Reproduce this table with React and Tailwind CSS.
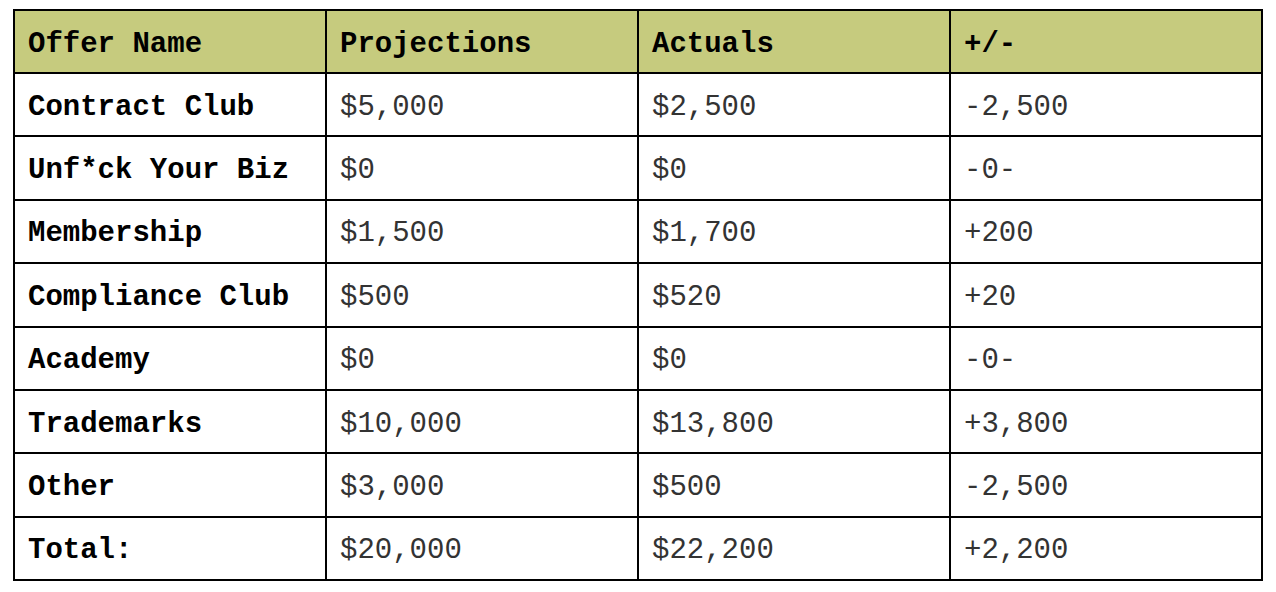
import React from 'react';

const rows = [
    ['Contract Club', '$5,000', '$2,500', '-2,500'],
    ['Unf*ck Your Biz', '$0', '$0', '-0-'],
    ['Membership', '$1,500', '$1,700', '+200'],
    ['Compliance Club', '$500', '$520', '+20'],
    ['Academy', '$0', '$0', '-0-'],
    ['Trademarks', '$10,000', '$13,800', '+3,800'],
    ['Other', '$3,000', '$500', '-2,500'],
    ['Total:', '$20,000', '$22,200', '+2,200'],
];

export default function App() {
    return (
        <div className="w-[1276px] h-[592px] bg-white pt-[9px] pl-[13px] font-['Liberation_Mono','Courier_New',monospace] text-[29px] leading-none text-black">
            <table className="w-[1250px] border-collapse border-2 border-black table-fixed">
                <thead>
                    <tr className="h-[63px] bg-[#c6cb7e]">
                        {['Offer Name', 'Projections', 'Actuals', '+/-'].map((h) => (
                            <th key={h} className="border-2 border-black px-[13px] pt-[5px] text-left font-bold align-middle">
                                {h}
                            </th>
                        ))}
                    </tr>
                </thead>
                <tbody>
                    {rows.map((r) => (
                        <tr key={r[0]} className="h-[63.4px]">
                            <td className="border-2 border-black px-[13px] pt-[5px] font-bold align-middle whitespace-nowrap">{r[0]}</td>
                            <td className="border-2 border-black px-[13px] pt-[5px] align-middle text-[#333]">{r[1]}</td>
                            <td className="border-2 border-black px-[13px] pt-[5px] align-middle text-[#333]">{r[2]}</td>
                            <td className="border-2 border-black px-[13px] pt-[5px] align-middle text-[#333]">{r[3]}</td>
                        </tr>
                    ))}
                </tbody>
            </table>
        </div>
    );
}
